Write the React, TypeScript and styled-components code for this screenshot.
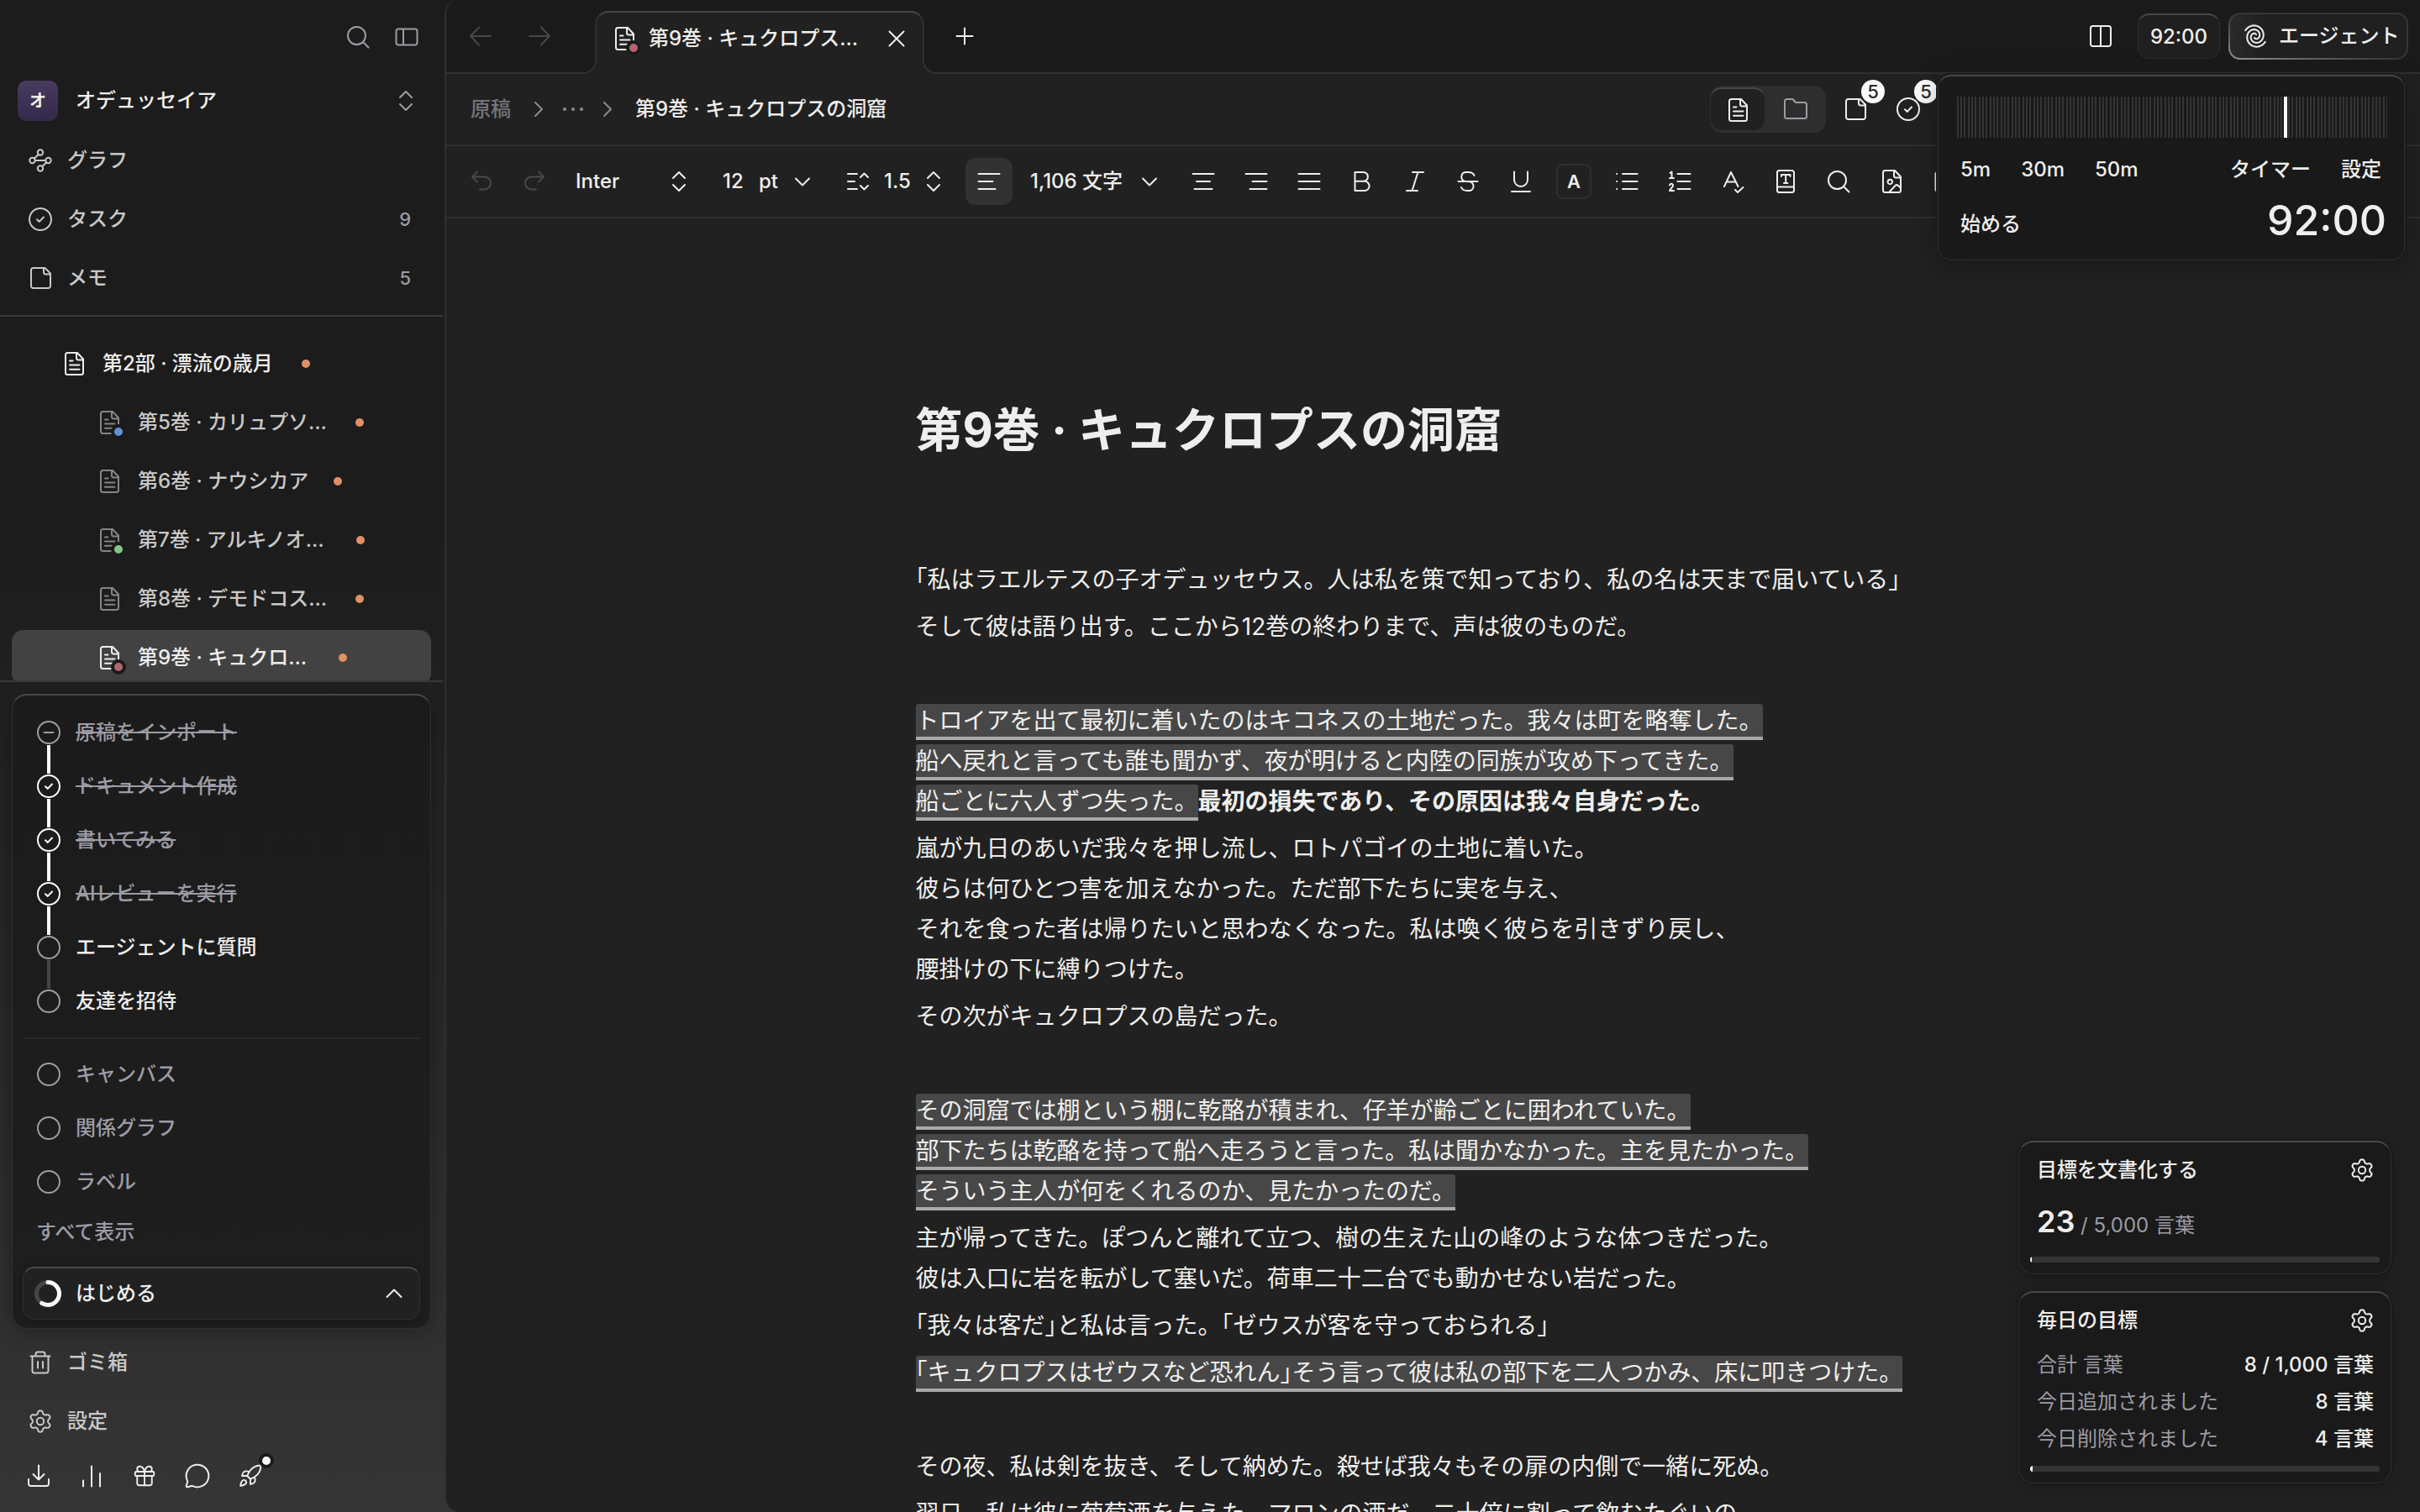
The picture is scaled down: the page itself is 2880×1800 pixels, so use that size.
import React from "react";
import styled, { createGlobalStyle, css } from "styled-components";
import { Gift, MessageCircle, Rocket } from "lucide-react";

const c = {
  bar: "#1a1a1a",
  side: "#1c1c1c",
  panel: "#212121",
  raised: "#2e2e2e",
  line: "#2e2e34",
  rule: "#393939",
  edge: "#2f2f2f",
  edgeTop: "#484848",
  text: "#efeeec",
  soft: "#c9c8c6",
  muted: "#9d9ca5",
  dim: "#75757b",
  white: "#fafafa",
  orange: "#e09064",
};

const Global = createGlobalStyle`
  *, *::before, *::after { box-sizing: border-box; }
  html, body, #root { height: 100%; }
  body {
    margin: 0;
    overflow: hidden;
    background: ${c.side};
    color: ${c.text};
    font: 500 24px/32px Inter, "Noto Sans CJK JP", sans-serif;
  }
  button, input, select {
    margin: 0; padding: 0; border: 0; background: none; color: inherit; font: inherit;
    appearance: none; outline: none;
  }
  button { display: inline-flex; align-items: center; text-align: left; cursor: pointer; }
  a { color: inherit; text-decoration: none; }
  ul, ol, p, h1, h2, dl, dd { margin: 0; padding: 0; list-style: none; }
  svg { display: block; flex: none; }
`;

/* ---------- icons: 28px grid, 2px strokes ---------- */

const Svg = styled.svg.attrs({
  viewBox: "0 0 28 28",
  fill: "none",
  stroke: "currentColor",
  strokeWidth: 2,
  strokeLinecap: "round",
  strokeLinejoin: "round",
  "aria-hidden": true,
})`
  width: 28px;
  height: 28px;
`;

const ring = "M27 14a13 13 0 1 1-26 0a13 13 0 0 1 26 0";
const sheet = "M6.5 1H18l7 7.5v16a2.5 2.5 0 0 1-2.5 2.5h-16A2.5 2.5 0 0 1 4 24.5v-21A2.5 2.5 0 0 1 6.5 1M17 1.5V7a2.5 2.5 0 0 0 2.5 2.5h5";
const node = (x: number, y: number) => `M${x + 3.2} ${y}a3.2 3.2 0 1 1-6.4 0a3.2 3.2 0 0 1 6.4 0`;

const shapes = {
  search: "M23 12.5a10.5 10.5 0 1 1-21 0a10.5 10.5 0 0 1 21 0M20.5 20.5l6 6",
  sidebar: "M4 4.5h20A2.5 2.5 0 0 1 26.5 7v14a2.5 2.5 0 0 1-2.5 2.5H4A2.5 2.5 0 0 1 1.5 21V7A2.5 2.5 0 0 1 4 4.5zM10 4.5v19",
  split: "M4.5 2h19A2.5 2.5 0 0 1 26 4.5v19a2.5 2.5 0 0 1-2.5 2.5h-19A2.5 2.5 0 0 1 2 23.5v-19A2.5 2.5 0 0 1 4.5 2zM14 2v24",
  upDown: "M7 10l7-7 7 7M7 18l7 7 7-7",
  graph: `${node(14, 4.5)}${node(4.5, 14)}${node(23.5, 14)}${node(14, 23.5)}M11.7 6.8L6.8 11.7M7.7 14h12.6M21.2 16.3l-4.9 4.9`,
  check: `${ring}M10 14.3l2.8 2.6 5.2-5.4`,
  minus: `${ring}M8.5 14h11`,
  circle: ring,
  note: "M5.5 2h14L26 8.5v15a2.5 2.5 0 0 1-2.5 2.5h-18A2.5 2.5 0 0 1 3 23.5v-19A2.5 2.5 0 0 1 5.5 2M18 2.5V7a2.5 2.5 0 0 0 2.5 2.5h5",
  doc: `${sheet}M9 10.5h3.5M9 15.5h11.5M9 20.8h11.5`,
  folder: "M3.5 2h7L14 6h10.5A2.5 2.5 0 0 1 27 8.5v14a2.5 2.5 0 0 1-2.5 2.5h-21A2.5 2.5 0 0 1 1 22.5v-18A2.5 2.5 0 0 1 3.5 2z",
  left: "M26 14H2M12 3.5L2 14l10 10.5",
  right: "M2 14h24M16 3.5L26 14 16 24.5",
  close: "M5.5 5.5l17 17M22.5 5.5l-17 17",
  plus: "M14 4.5v19M4.5 14h19",
  chevRight: "M10 6l8 8-8 8",
  chevDown: "M6 10.5l8 8 8-8",
  chevUp: "M5.5 18L14 9.5l8.5 8.5",
  undo: "M9 2.5L3 8.5l6 6M3 8.5h14.5a7.5 7.5 0 0 1 0 15H12",
  redo: "M19 2.5l6 6-6 6M25 8.5H10.5a7.5 7.5 0 0 0 0 15H16",
  spacing: "M2 5h11M2 14h8M2 23h11M17 9l4.5-4.5L26 9M17 19l4.5 4.5L26 19",
  alignLeft: "M1.5 5h25M1.5 14h17M1.5 23h20",
  alignCenter: "M1.5 5h25M6 14h16M3.5 23h21",
  alignRight: "M1.5 5h25M9.5 14h17M6.5 23h20",
  justify: "M1.5 5h25M1.5 14h25M1.5 23h25",
  bold: "M5.5 3h10a5.4 5.4 0 0 1 0 10.8h-10zM5.5 13.8H17A5.6 5.6 0 0 1 17 25H5.5z",
  italic: "M11 3h13M4 25h13M17.5 3l-7 22",
  strike: "M21.5 7C20.5 4.5 18 3 14.5 3H12a5.5 5.5 0 0 0-2.5 10.5M2.5 14h23M15 14.2A5.5 5.5 0 0 1 16.5 25H13c-3.5 0-6-1.5-7-4",
  underline: "M6 2.5V12a8 8 0 0 0 16 0V2.5M3 26h22",
  bullets: "M2 5h.2M2 14h.2M2 23h.2M9 5h17.5M9 14h17.5M9 23h17.5",
  numbers: "M2.5 4l2-1.5V10M2 10h5M2 18.5c.8-2.5 4.5-2 4 .5-.3 1.7-2.5 3-4 6h5M11.5 5h15M11.5 14h15M11.5 23h15",
  spell: "M4 20l8-17 8.5 17M7 14.5h10.5M17 24l3 3 6.5-6",
  bookType: "M6.5 1h15A2.5 2.5 0 0 1 24 3.5v21a2.5 2.5 0 0 1-2.5 2.5h-15A2.5 2.5 0 0 1 4 24.5v-21A2.5 2.5 0 0 1 6.5 1zM4.5 20.5h19M9 8V6h10.5v2M14.2 6v10M12 16h4.5",
  image: `${sheet}M15 14.5a2.7 2.7 0 1 1-5.4 0a2.7 2.7 0 0 1 5.4 0M11.5 26.5l7-7.5a2.5 2.5 0 0 1 3.5 0l3 2.7`,
  calendar: "M6 3h16a2.5 2.5 0 0 1 2.5 2.5v18A2.5 2.5 0 0 1 22 26H6a2.5 2.5 0 0 1-2.5-2.5v-18A2.5 2.5 0 0 1 6 3zM4 10h20",
  trash: "M2.5 6.5h23M8.5 6V4A2.5 2.5 0 0 1 11 1.5h6A2.5 2.5 0 0 1 19.5 4v2M4.5 7v17A2.5 2.5 0 0 0 7 26.5h14a2.5 2.5 0 0 0 2.5-2.5V7M11 13v7.5M17 13v7.5",
  download: "M14 1.5v17M7.5 12l6.5 6.5 6.5-6.5M2 18v5.5A2.5 2.5 0 0 0 4.5 26h19a2.5 2.5 0 0 0 2.5-2.5V18",
  bars: "M4 19.5v7M14 2.5v24M24 11v15.5",
};

const Icon = ({ name }: { name: keyof typeof shapes }) => (
  <Svg>
    <path d={shapes[name]} />
  </Svg>
);

const Ellipsis = () => (
  <Svg>
    <g fill="currentColor" stroke="none">
      <circle cx="4" cy="14" r="2" />
      <circle cx="14" cy="14" r="2" />
      <circle cx="24" cy="14" r="2" />
    </g>
  </Svg>
);

const trace = (n: number, at: (t: number) => [number, number]) =>
  Array.from({ length: n + 1 }, (_, i) => at(i / n))
    .map(([x, y], i) => `${i ? "L" : "M"}${x.toFixed(2)} ${y.toFixed(2)}`)
    .join("");

const gearPath = trace(120, (t) => {
  const a = t * Math.PI * 2;
  const r = 10.9 + 1.9 * Math.tanh(1.6 * Math.cos(6 * a));
  return [14 + r * Math.sin(a), 14 - r * Math.cos(a)];
});

const Gear = () => (
  <Svg>
    <path d={gearPath + "Z"} />
    <circle cx="14" cy="14" r="4.2" />
  </Svg>
);

const spiralArm = (turn: number) =>
  trace(60, (t) => {
    const r = 14.2 - 12 * t;
    const a = 0.5 + turn + t * Math.PI * 2.5;
    return [14 + r * 0.95 * Math.cos(a), 14 + r * Math.sin(a)];
  });

const Spiral = () => (
  <Svg>
    <path d={spiralArm(0)} />
    <path d={spiralArm(Math.PI)} />
  </Svg>
);

const RingSvg = styled.svg`
  width: 32px;
  height: 32px;
`;
const Ring = () => (
  <RingSvg viewBox="0 0 32 32" fill="none" aria-hidden>
    <circle cx="16" cy="16" r="13.5" stroke="#454545" strokeWidth="5" />
    <circle
      cx="16"
      cy="16"
      r="13.5"
      stroke={c.white}
      strokeWidth="5"
      pathLength={100}
      strokeDasharray="59 100"
      strokeLinecap="round"
      transform="rotate(-90 16 16)"
    />
  </RingSvg>
);

/* ---------- shared ---------- */

const raisedEdge = css`
  border: 1px solid ${c.edge};
  border-top: 2px solid ${c.edgeTop};
`;

const Shell = styled.div`
  display: grid;
  grid-template-columns: 529px minmax(0, 1fr);
  height: 100vh;
  background: linear-gradient(to bottom, ${c.side} 35%, #353535);
`;

const IconButton = styled.button<{ $tone?: string; $width?: number }>`
  justify-content: center;
  width: ${(p) => p.$width ?? 28}px;
  height: 56px;
  color: ${(p) => p.$tone ?? c.text};
`;

/* ---------- sidebar ---------- */

const Sidebar = styled.aside`
  display: flex;
  flex-direction: column;
  min-height: 0;
  padding-right: 2px;
`;
const SideTop = styled.div`
  display: flex;
  justify-content: flex-end;
  align-items: center;
  gap: 30px;
  height: 88px;
  padding-right: 29px;
`;
const Workspace = styled.button`
  gap: 21px;
  height: 64px;
  padding: 0 30px 0 21px;
  color: ${c.text};
  & > svg { margin-left: auto; color: ${c.muted}; }
`;
const Avatar = styled.span`
  display: grid;
  place-items: center;
  width: 48px;
  height: 48px;
  border-radius: 10px;
  background: linear-gradient(to bottom, #473b5e, #33294a);
  font-size: 20px;
  font-weight: 700;
`;
const Nav = styled.nav`
  padding: 4px 0 9px;
`;
const NavLink = styled.a`
  display: flex;
  align-items: center;
  gap: 18px;
  height: 70px;
  padding: 0 38px 0 34px;
  color: ${c.soft};
`;
const Count = styled.span`
  margin-left: auto;
  color: ${c.muted};
  font-size: 22px;
`;
const Tree = styled.ul`
  flex: 1;
  min-height: 0;
  overflow: hidden;
  padding: 23px 14px 0;
  border-top: 2px solid ${c.rule};
  border-bottom: 2px solid ${c.rule};
`;
const TreeLink = styled.a<{ $level: number; $active?: boolean }>`
  display: flex;
  align-items: center;
  height: 66px;
  margin-bottom: 4px;
  padding-left: ${(p) => 18 + p.$level * 42}px;
  border-radius: 14px;
  background: ${(p) => (p.$active ? "#424242" : "transparent")};
  color: ${(p) => (p.$active || p.$level === 1 ? c.text : c.soft)};
  & > span:first-child { color: ${(p) => (p.$active || p.$level === 1 ? c.text : "#858585")}; }
`;
const DocMark = styled.span<{ $dot?: string }>`
  position: relative;
  &::after {
    content: "";
    display: ${(p) => (p.$dot ? "block" : "none")};
    position: absolute;
    right: -6px;
    bottom: -6px;
    width: 18px;
    height: 18px;
    border: 4px solid #1b1b1b;
    border-radius: 50%;
    background: ${(p) => p.$dot};
  }
`;
const TreeName = styled.span`
  margin-left: 20px;
  white-space: nowrap;
`;
const Dot = styled.i<{ $gap: number }>`
  width: 10px;
  height: 10px;
  margin-left: ${(p) => p.$gap}px;
  border-radius: 50%;
  background: ${c.orange};
`;

const Guide = styled.section`
  margin: 14px 14px 5px;
  padding: 30px 12px 10px;
  ${raisedEdge}
  border-radius: 18px;
  background: linear-gradient(to bottom, #1b1b1b, #1e1e1e);
  box-shadow: 0 4px 24px rgba(0, 0, 0, 0.3);
`;
const Steps = styled.ol`
  padding: 0 17px;
`;
const Step = styled.li<{ $link?: string }>`
  display: flex;
  flex-direction: column;
  align-items: flex-start;
  height: ${(p) => (p.$link ? 64 : 28)}px;
  &::after {
    content: "";
    display: ${(p) => (p.$link ? "block" : "none")};
    width: 4px;
    height: 34px;
    margin: 1px 0 0 12px;
    background: ${(p) => p.$link};
  }
`;
const StepButton = styled.button<{ $tone: string; $mark: string; $done?: boolean }>`
  gap: 18px;
  height: 28px;
  color: ${(p) => p.$tone};
  & > svg { color: ${(p) => p.$mark}; }
  & > span { text-decoration: ${(p) => (p.$done ? "line-through" : "none")}; }
`;
const More = styled.ul`
  display: flex;
  flex-direction: column;
  gap: 36px;
  margin-top: 29px;
  padding: 28px 17px 0;
  border-top: 2px solid #272727;
`;
const ShowAll = styled.button`
  margin: 30px 16px 25px;
  color: ${c.muted};
`;
const StartButton = styled.button`
  width: 100%;
  height: 63px;
  gap: 17px;
  padding: 0 16px 0 13px;
  ${raisedEdge}
  border-radius: 14px;
  background: ${c.panel};
  box-shadow: 0 2px 8px rgba(0, 0, 0, 0.25);
  & > svg:last-child { margin-left: auto; }
`;
const SideFoot = styled.div`
  display: flex;
  align-items: center;
  gap: 35px;
  height: 60px;
  margin-bottom: 13px;
  padding-left: 32px;
`;
const NewMark = styled.span`
  position: relative;
  &::after {
    content: "";
    position: absolute;
    top: -12px;
    right: -13px;
    width: 18px;
    height: 18px;
    border: 4px solid #1b1b1b;
    border-radius: 50%;
    background: ${c.white};
  }
`;

/* ---------- main panel ---------- */

const Main = styled.main`
  position: relative;
  display: flex;
  flex-direction: column;
  min-width: 0;
  min-height: 0;
  overflow: hidden;
  border-left: 2px solid ${c.line};
  border-radius: 18px 0 0 18px;
  background: ${c.panel};
`;
const TabBar = styled.header`
  display: flex;
  flex: none;
  align-items: center;
  height: 88px;
  padding: 0 14px 0 27px;
  border-bottom: 2px solid ${c.line};
  background: ${c.bar};
`;
const BackForward = styled.div`
  display: flex;
  gap: 42px;
`;
const flare = css`
  content: "";
  position: absolute;
  bottom: 0;
  width: 16px;
  height: 16px;
`;
const Tab = styled.div`
  position: relative;
  align-self: flex-end;
  display: flex;
  align-items: center;
  width: 392px;
  height: 75px;
  margin: 0 34px -2px 52px;
  padding: 0 17px 12px 19px;
  border: 2px solid ${c.line};
  border-top-color: ${c.edgeTop};
  border-bottom: 0;
  border-radius: 16px 16px 0 0;
  background: ${c.panel};
  &::before {
    ${flare}
    left: -16px;
    background: radial-gradient(circle at 0 0, transparent 14px, ${c.line} 14px 16px, ${c.panel} 16px);
  }
  &::after {
    ${flare}
    right: -16px;
    background: radial-gradient(circle at 100% 0, transparent 14px, ${c.line} 14px 16px, ${c.panel} 16px);
  }
`;
const TabName = styled.span`
  flex: 1;
  padding-left: 15px;
  white-space: nowrap;
`;
const TabTools = styled.div`
  display: flex;
  align-items: center;
  margin-left: auto;
`;
const TimeButton = styled.button`
  justify-content: center;
  width: 98px;
  height: 54px;
  margin: 0 10px 0 30px;
  ${raisedEdge}
  border-radius: 14px;
  background: #1f1f1f;
`;
const AgentButton = styled.button`
  gap: 14px;
  width: 214px;
  height: 56px;
  padding-left: 16px;
  border: 2px solid transparent;
  border-radius: 14px;
  background: linear-gradient(to right, #2a2a2a, #202020 20%) padding-box,
    linear-gradient(to top right, #9a9a9a, #6a6a6a 20%, #35353b 48%) border-box;
`;

const CrumbBar = styled.div`
  display: flex;
  flex: none;
  align-items: center;
  height: 86px;
  padding: 0 595px 0 29px;
  border-bottom: 2px solid ${c.line};
`;
const Crumbs = styled.nav`
  display: flex;
  align-items: center;
  gap: 13px;
  color: ${c.dim};
  & > svg { color: #8b8b90; }
  & > a { margin-right: 6px; }
  & > strong { margin-left: 6px; font-weight: 500; color: ${c.text}; }
`;
const CrumbTools = styled.div`
  display: flex;
  align-items: center;
  gap: 35px;
  margin-left: auto;
`;
const Toggle = styled.div`
  display: flex;
  align-items: center;
  height: 56px;
  margin-right: -14px;
  border-radius: 14px;
  background: ${c.raised};
`;
const ToggleButton = styled.button<{ $on?: boolean }>`
  justify-content: center;
  width: ${(p) => (p.$on ? 66 : 72)}px;
  height: 52px;
  border-radius: 14px;
  color: ${(p) => (p.$on ? c.text : c.muted)};
  ${(p) => p.$on && css`
    ${raisedEdge}
    background: ${c.panel};
  `}
`;
const Badged = styled.button`
  position: relative;
  height: 56px;
`;
const Badge = styled.span`
  position: absolute;
  top: -7px;
  right: -21px;
  display: grid;
  place-items: center;
  width: 28px;
  height: 28px;
  border-radius: 50%;
  background: ${c.white};
  color: #2a2a2a;
  font-size: 22px;
  line-height: 28px;
`;

const ToolBar = styled.div`
  display: flex;
  flex: none;
  align-items: center;
  gap: 7px;
  height: 86px;
  padding-left: 14px;
  border-bottom: 2px solid ${c.line};
  overflow: hidden;
  & > * { flex: none; }
`;
const Field = styled.label<{ $width: number; $left?: number; $right?: number }>`
  display: flex;
  align-items: center;
  width: ${(p) => p.$width}px;
  margin: 0 ${(p) => p.$right ?? 0}px 0 ${(p) => p.$left ?? 0}px;
  select, input { flex: 1; min-width: 0; width: 0; }
  & > svg:first-child { margin-right: 17px; }
  & > svg:last-child { margin-right: -6px; }
`;
const ToolButton = styled.button<{ $on?: boolean }>`
  justify-content: center;
  width: 56px;
  height: 56px;
  border-radius: 12px;
  background: ${(p) => (p.$on ? "#323232" : "transparent")};
`;
const CountButton = styled.button`
  justify-content: space-between;
  width: 150px;
  margin: 0 21px 0 14px;
  white-space: nowrap;
  & > svg { margin-right: -6px; }
`;
const ColorButton = styled.button`
  justify-content: center;
  width: 42px;
  height: 42px;
  margin: 0 7px;
  border: 2px solid ${c.line};
  border-radius: 8px;
  font-size: 22px;
  font-weight: 600;
`;

const Page = styled.article`
  width: 100%;
  max-width: 1232px;
  margin: 0 auto;
  padding-top: 217px;
  font-size: 28px;
  font-weight: 400;
  line-height: 48px;
  h1 {
    margin-bottom: 119px;
    font-size: 56px;
    font-weight: 700;
    line-height: 70px;
  }
  p { min-height: 48px; margin-bottom: 8px; white-space: nowrap; }
  b { font-weight: 700; }
`;
const Mark = styled.mark`
  padding: 3px 0 2px;
  border-bottom: 4px solid #a9a9a9;
  border-radius: 3px 3px 0 0;
  background: #474747;
  color: inherit;
`;
/* corner brackets set on a half-width body */
const Bracket = styled.span`
  font-feature-settings: "halt";
`;

/* ---------- overlays ---------- */

const Timer = styled.section`
  position: absolute;
  top: 89px;
  right: 18px;
  z-index: 3;
  width: 556px;
  padding: 24px 20px 15px 22px;
  ${raisedEdge}
  border-radius: 16px;
  background: #191919;
  box-shadow: 0 0 0 2px #1b1b1b, 0 8px 32px rgba(0, 0, 0, 0.3);
`;
const Ruler = styled.input`
  display: block;
  width: 100%;
  height: 49px;
  background: repeating-linear-gradient(to right, #343434 0 2px, transparent 2px 4px, #343434 4px 6px, transparent 6px 8px, #343434 8px 10px, transparent 10px 13px);
  &::-webkit-slider-thumb {
    appearance: none;
    width: 4px;
    height: 49px;
    background: ${c.white};
  }
`;
const TimerRow = styled.div`
  display: flex;
  align-items: center;
  gap: 36px;
  margin-top: 22px;
  padding: 0 7px 0 4px;
`;
const StartRow = styled(TimerRow)`
  align-items: flex-end;
  margin-top: 12px;
  button { padding-bottom: 11px; }
`;
const Push = styled.span`
  flex: 1;
`;
const Clock = styled.output`
  margin-right: -6px;
  font-size: 50px;
  line-height: 64px;
`;

const Goals = styled.div`
  position: absolute;
  right: 34px;
  bottom: 34px;
  z-index: 2;
  display: flex;
  flex-direction: column;
  gap: 20px;
  width: 444px;
`;
const GoalCard = styled.section`
  padding: 12px 13px 13px;
  ${raisedEdge}
  border-radius: 18px;
  background: #1a1a1a;
  box-shadow: 0 0 0 2px rgba(0, 0, 0, 0.1), 0 4px 24px rgba(0, 0, 0, 0.25);
  progress {
    display: block;
    width: 100%;
    height: 7px;
    border-radius: 4px;
    overflow: hidden;
    appearance: none;
    &::-webkit-progress-bar { background: #343434; }
    &::-webkit-progress-value { background: ${c.white}; }
  }
`;
const GoalHead = styled.div`
  display: flex;
  justify-content: space-between;
  align-items: center;
  height: 42px;
  padding: 0 7px 0 8px;
  h2 { font-size: 24px; font-weight: 500; line-height: 32px; }
`;
const GoalCount = styled.p`
  padding: 16px 8px 13px;
  color: ${c.muted};
  font-weight: 400;
  line-height: 48px;
  strong { color: ${c.text}; font-size: 36px; font-weight: 600; }
`;
const GoalRows = styled.dl`
  display: grid;
  gap: 12px;
  padding: 16px 7px 16px 8px;
  & > div { display: flex; justify-content: space-between; }
  dt { color: ${c.muted}; font-weight: 400; }
`;

/* ---------- data ---------- */

const chapters = [
  { name: "第2部 · 漂流の歳月", level: 1, gap: 34 },
  { name: "第5巻 · カリュプソ…", level: 2, gap: 34, dot: "#6490d8" },
  { name: "第6巻 · ナウシカア", level: 2, gap: 30 },
  { name: "第7巻 · アルキノオ…", level: 2, gap: 38, dot: "#84c489" },
  { name: "第8巻 · デモドコス…", level: 2, gap: 34 },
  { name: "第9巻 · キュクロ…", level: 2, gap: 38, dot: "#b4666c", active: true },
];

const steps: { name: string; icon: keyof typeof shapes; done?: boolean; link?: string }[] = [
  { name: "原稿をインポート", icon: "minus", done: true, link: c.white },
  { name: "ドキュメント作成", icon: "check", done: true, link: c.white },
  { name: "書いてみる", icon: "check", done: true, link: c.white },
  { name: "AIレビューを実行", icon: "check", done: true, link: c.white },
  { name: "エージェントに質問", icon: "circle", link: "#454548" },
  { name: "友達を招待", icon: "circle" },
];

const formats = ["alignCenter", "alignRight", "justify", "bold", "italic", "strike", "underline"] as const;
const inserts = ["bullets", "numbers", "spell", "bookType", "search", "image", "calendar"] as const;

const labels: Record<string, string> = {
  alignCenter: "中央揃え", alignRight: "右揃え", justify: "両端揃え", bold: "太字", italic: "斜体",
  strike: "取り消し線", underline: "下線", bullets: "箇条書き", numbers: "番号付きリスト",
  spell: "校正", bookType: "辞書", search: "検索", image: "画像", calendar: "日付",
};

const Quoted = ({ children }: { children: string }) => (
  <>
    {children.split(/([「」])/).map((part, i) =>
      i % 2 ? <Bracket key={i}>{part}</Bracket> : part
    )}
  </>
);

export default function App() {
  return (
    <Shell>
      <Global />
      <Sidebar>
        <SideTop>
          <IconButton $tone={c.muted} aria-label="検索"><Icon name="search" /></IconButton>
          <IconButton $tone={c.muted} aria-label="サイドバー"><Icon name="sidebar" /></IconButton>
        </SideTop>
        <Workspace>
          <Avatar>オ</Avatar>
          オデュッセイア
          <Icon name="upDown" />
        </Workspace>
        <Nav>
          <NavLink href="#graph"><Icon name="graph" />グラフ</NavLink>
          <NavLink href="#tasks"><Icon name="check" />タスク<Count>9</Count></NavLink>
          <NavLink href="#notes"><Icon name="note" />メモ<Count>5</Count></NavLink>
        </Nav>
        <Tree>
          {chapters.map((ch) => (
            <li key={ch.name}>
              <TreeLink href="#chapter" $level={ch.level} $active={ch.active}>
                <DocMark $dot={ch.dot}><Icon name="doc" /></DocMark>
                <TreeName>{ch.name}</TreeName>
                <Dot $gap={ch.gap} />
              </TreeLink>
            </li>
          ))}
        </Tree>
        <Guide>
          <Steps>
            {steps.map((s) => (
              <Step key={s.name} $link={s.link}>
                <StepButton
                  $tone={s.done ? c.muted : c.text}
                  $mark={s.icon === "check" ? c.white : c.muted}
                  $done={s.done}
                >
                  <Icon name={s.icon} />
                  <span>{s.name}</span>
                </StepButton>
              </Step>
            ))}
          </Steps>
          <More>
            {["キャンバス", "関係グラフ", "ラベル"].map((name) => (
              <Step key={name}>
                <StepButton $tone={c.muted} $mark={c.muted}>
                  <Icon name="circle" />
                  <span>{name}</span>
                </StepButton>
              </Step>
            ))}
          </More>
          <ShowAll>すべて表示</ShowAll>
          <StartButton><Ring />はじめる<Icon name="chevUp" /></StartButton>
        </Guide>
        <NavLink href="#trash"><Icon name="trash" />ゴミ箱</NavLink>
        <NavLink href="#settings"><Gear />設定</NavLink>
        <SideFoot>
          <IconButton aria-label="ダウンロード"><Icon name="download" /></IconButton>
          <IconButton aria-label="統計"><Icon name="bars" /></IconButton>
          <IconButton aria-label="ギフト"><Gift size={30} strokeWidth={1.5} /></IconButton>
          <IconButton aria-label="チャット"><MessageCircle size={32} strokeWidth={1.5} /></IconButton>
          <IconButton aria-label="新機能"><NewMark><Rocket size={30} strokeWidth={1.5} /></NewMark></IconButton>
        </SideFoot>
      </Sidebar>

      <Main>
        <TabBar>
          <BackForward>
            <IconButton $tone="#48484a" aria-label="戻る"><Icon name="left" /></IconButton>
            <IconButton $tone="#48484a" aria-label="進む"><Icon name="right" /></IconButton>
          </BackForward>
          <Tab>
            <DocMark $dot="#b4666c"><Icon name="doc" /></DocMark>
            <TabName>第9巻 · キュクロプス…</TabName>
            <IconButton aria-label="閉じる"><Icon name="close" /></IconButton>
          </Tab>
          <IconButton aria-label="新しいタブ"><Icon name="plus" /></IconButton>
          <TabTools>
            <IconButton aria-label="分割"><Icon name="split" /></IconButton>
            <TimeButton>92:00</TimeButton>
            <AgentButton><Spiral />エージェント</AgentButton>
          </TabTools>
        </TabBar>

        <CrumbBar>
          <Crumbs>
            <a href="#draft">原稿</a>
            <Icon name="chevRight" />
            <IconButton $tone="#8b8b90" aria-label="途中の階層"><Ellipsis /></IconButton>
            <Icon name="chevRight" />
            <strong>第9巻 · キュクロプスの洞窟</strong>
          </Crumbs>
          <CrumbTools>
            <Toggle>
              <ToggleButton $on aria-label="文書"><Icon name="doc" /></ToggleButton>
              <ToggleButton aria-label="フォルダ"><Icon name="folder" /></ToggleButton>
            </Toggle>
            <Badged aria-label="メモ"><Icon name="note" /><Badge>5</Badge></Badged>
            <Badged aria-label="タスク"><Icon name="check" /><Badge>5</Badge></Badged>
          </CrumbTools>
        </CrumbBar>

        <ToolBar>
          <IconButton $width={56} $tone="#4a4a4c" aria-label="元に戻す"><Icon name="undo" /></IconButton>
          <IconButton $width={56} $tone="#4a4a4c" aria-label="やり直す"><Icon name="redo" /></IconButton>
          <Field $width={131} $left={14} $right={37}>
            <select aria-label="フォント"><option>Inter</option></select>
            <Icon name="upDown" />
          </Field>
          <Field $width={36}>
            <input aria-label="文字サイズ" defaultValue="12" />
          </Field>
          <Field $width={60} $right={37}>
            <select aria-label="単位"><option>pt</option></select>
            <Icon name="chevDown" />
          </Field>
          <Field $width={112} $right={23}>
            <Icon name="spacing" />
            <input aria-label="行間" defaultValue="1.5" />
            <Icon name="upDown" />
          </Field>
          <ToolButton $on aria-label="左揃え"><Icon name="alignLeft" /></ToolButton>
          <CountButton>1,106 文字<Icon name="chevDown" /></CountButton>
          {formats.map((f) => <ToolButton key={f} aria-label={labels[f]}><Icon name={f} /></ToolButton>)}
          <ColorButton aria-label="文字色">A</ColorButton>
          {inserts.map((f) => <ToolButton key={f} aria-label={labels[f]}><Icon name={f} /></ToolButton>)}
        </ToolBar>

        <Page>
          <h1>第9巻 · キュクロプスの洞窟</h1>
          <p><Quoted>「私はラエルテスの子オデュッセウス。人は私を策で知っており、私の名は天まで届いている」</Quoted></p>
          <p>そして彼は語り出す。ここから12巻の終わりまで、声は彼のものだ。</p>
          <p />
          <p>
            <Mark>トロイアを出て最初に着いたのはキコネスの土地だった。我々は町を略奪した。</Mark><br />
            <Mark>船へ戻れと言っても誰も聞かず、夜が明けると内陸の同族が攻め下ってきた。</Mark><br />
            <Mark>船ごとに六人ずつ失った。</Mark><b>最初の損失であり、その原因は我々自身だった。</b>
          </p>
          <p>
            嵐が九日のあいだ我々を押し流し、ロトパゴイの土地に着いた。<br />
            彼らは何ひとつ害を加えなかった。ただ部下たちに実を与え、<br />
            それを食った者は帰りたいと思わなくなった。私は喚く彼らを引きずり戻し、<br />
            腰掛けの下に縛りつけた。
          </p>
          <p>その次がキュクロプスの島だった。</p>
          <p />
          <p>
            <Mark>その洞窟では棚という棚に乾酪が積まれ、仔羊が齢ごとに囲われていた。</Mark><br />
            <Mark>部下たちは乾酪を持って船へ走ろうと言った。私は聞かなかった。主を見たかった。</Mark><br />
            <Mark>そういう主人が何をくれるのか、見たかったのだ。</Mark>
          </p>
          <p>
            主が帰ってきた。ぽつんと離れて立つ、樹の生えた山の峰のような体つきだった。<br />
            彼は入口に岩を転がして塞いだ。荷車二十二台でも動かせない岩だった。
          </p>
          <p><Quoted>「我々は客だ」と私は言った。「ゼウスが客を守っておられる」</Quoted></p>
          <p><Mark><Quoted>「キュクロプスはゼウスなど恐れん」そう言って彼は私の部下を二人つかみ、床に叩きつけた。</Quoted></Mark></p>
          <p />
          <p>その夜、私は剣を抜き、そして納めた。殺せば我々もその扉の内側で一緒に死ぬ。</p>
          <p>翌日、私は彼に葡萄酒を与えた。マロンの酒だ。二十倍に割って飲むたぐいの</p>
        </Page>

        <Timer>
          <Ruler type="range" aria-label="分" min={0} max={120} defaultValue={92} />
          <TimerRow>
            <button>5m</button>
            <button>30m</button>
            <button>50m</button>
            <Push />
            <button>タイマー</button>
            <button>設定</button>
          </TimerRow>
          <StartRow>
            <button>始める</button>
            <Push />
            <Clock>92:00</Clock>
          </StartRow>
        </Timer>

        <Goals>
          <GoalCard>
            <GoalHead>
              <h2>目標を文書化する</h2>
              <IconButton aria-label="目標の設定"><Gear /></IconButton>
            </GoalHead>
            <GoalCount><strong>23</strong> / 5,000 言葉</GoalCount>
            <progress aria-label="目標" value={23} max={5000} />
          </GoalCard>
          <GoalCard>
            <GoalHead>
              <h2>毎日の目標</h2>
              <IconButton aria-label="毎日の目標の設定"><Gear /></IconButton>
            </GoalHead>
            <GoalRows>
              <div><dt>合計 言葉</dt><dd>8 / 1,000 言葉</dd></div>
              <div><dt>今日追加されました</dt><dd>8 言葉</dd></div>
              <div><dt>今日削除されました</dt><dd>4 言葉</dd></div>
            </GoalRows>
            <progress aria-label="毎日の目標" value={8} max={1000} />
          </GoalCard>
        </Goals>
      </Main>
    </Shell>
  );
}
